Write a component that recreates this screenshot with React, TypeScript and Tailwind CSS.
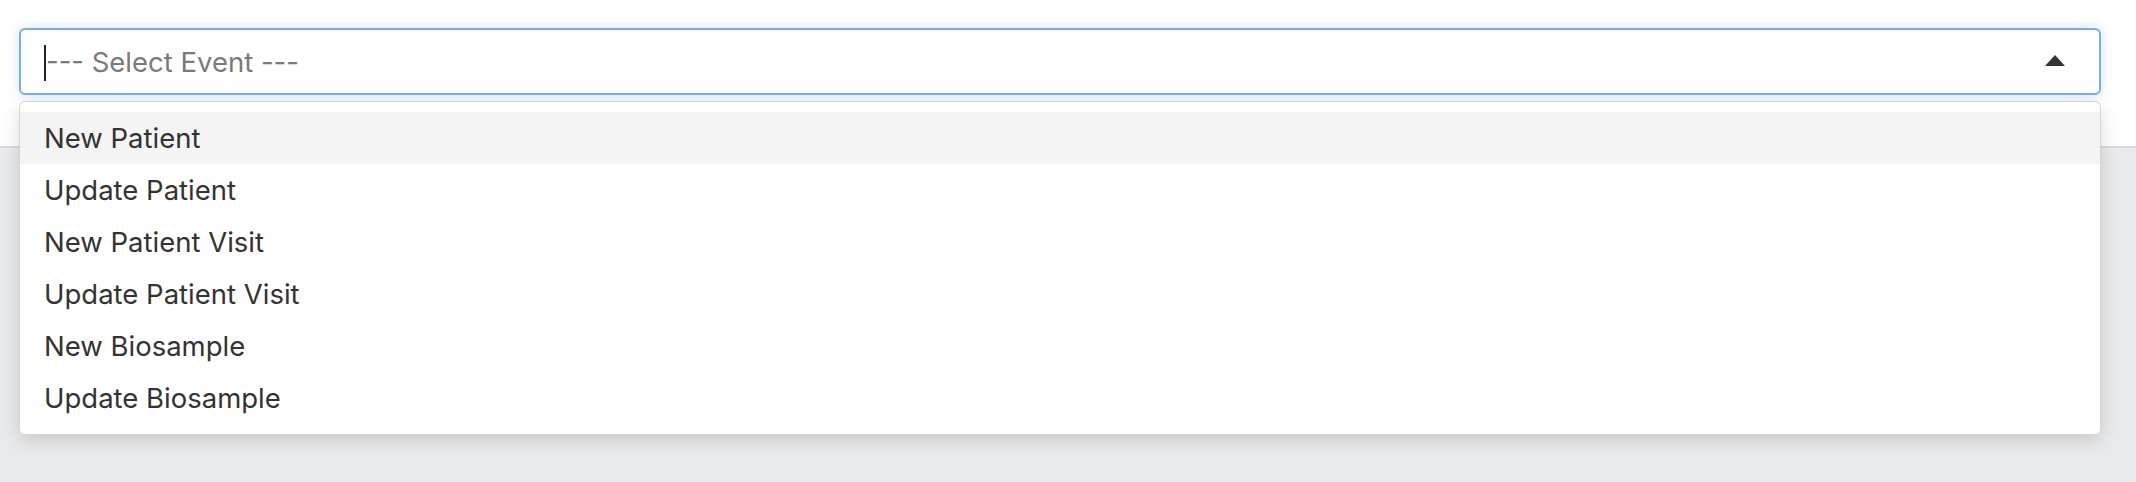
import { useState } from "react";

const events = [
  "New Patient",
  "Update Patient",
  "New Patient Visit",
  "Update Patient Visit",
  "New Biosample",
  "Update Biosample",
];

export default function App() {
  const [active, setActive] = useState(0);

  return (
    <div className="min-h-[482px] bg-[#e9eaec] font-['Inter',sans-serif] text-[#333]">
      <div className="relative h-[148px] border-b-2 border-[#d8d9dc] bg-white px-[19px] pt-[28px]">
        <div className="flex h-[67px] w-[2082px] items-center rounded-[6px] border-2 border-[#78ade8] bg-white pl-[23px] pr-[34px] shadow-[0_0_12px_rgba(120,173,232,0.35)]">
          <span className="mt-[3px] h-[36px] w-[2px] bg-[#222]" />
          <span className="flex-1 pt-[3px] text-[27.5px] text-[#7a7a7a]">--- Select Event ---</span>
          <svg width="20" height="11" viewBox="0 0 20 11" className="mb-[2px]">
            <path d="M10 0 L20 11 L0 11 Z" fill="#333" />
          </svg>
        </div>

        <ul className="absolute left-[19px] top-[101px] z-10 w-[2082px] rounded-[6px] border border-[#d4d4d4] bg-white pb-[10px] pt-[10px] shadow-[0_6px_18px_rgba(0,0,0,0.14)]">
          {events.map((e, i) => (
            <li
              key={e}
              onMouseEnter={() => setActive(i)}
              className={
                "flex h-[52px] items-center px-[24px] pt-[2px] text-[27.5px] " +
                (i === active ? "bg-[#f4f4f4]" : "bg-white")
              }
            >
              {e}
            </li>
          ))}
        </ul>
      </div>
    </div>
  );
}
